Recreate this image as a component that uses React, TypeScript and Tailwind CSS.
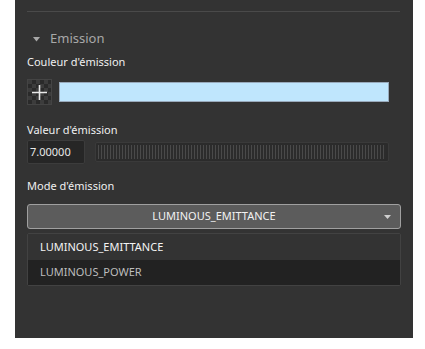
import React from 'react';

const Checker = () => (
  <div className="relative w-[25px] h-[26px] border border-[#444] bg-[repeating-conic-gradient(#2a2a2a_0_25%,#3c3c3c_0_50%)] bg-[length:8px_8px] flex items-center justify-center">
    <svg width="17" height="17" viewBox="0 0 17 17">
      <path d="M8.5 1v15M1 8.5h15" stroke="#e8e8e8" strokeWidth="1.6" />
    </svg>
  </div>
);

export default function App() {
  return (
    <div className="w-[425px] h-[349px] bg-white font-['Noto_Sans',sans-serif]">
      <div className="ml-[15px] w-[398px] h-[338px] bg-[#333333] pt-[11px] px-[12px]">
        <div className="h-px bg-[#4a4a4a] mr-[1px]" />

        <div className="flex items-center h-[20px] mt-[17px] pl-[6px] gap-[10px] text-[#a8a8a8] text-[13px]">
          <svg width="7" height="5" viewBox="0 0 7 5">
            <path d="M0 0h7L3.5 4.5z" fill="#a8a8a8" />
          </svg>
          <span>Emission</span>
        </div>

        <div className="mt-[5px] text-[11px] text-[#f0f0f0] leading-[16px]">Couleur d'émission</div>
        <div className="flex items-center gap-[7px] mt-[9px] mr-[12px]">
          <Checker />
          <div className="flex-1 h-[20px] bg-[#bfe6fd] border border-[#9ab]" />
        </div>

        <div className="mt-[17px] text-[11px] text-[#f0f0f0] leading-[16px]">Valeur d'émission</div>
        <div className="flex items-center gap-[10px] mt-[2px] mr-[12px]">
          <div className="w-[58px] h-[24px] bg-[#262626] border border-[#3c3c3c] rounded-[2px] flex items-center pl-[2px] text-[11px] text-[#e8e8e8]">
            7.00000
          </div>
          <div className="flex-1 h-[20px] border border-[#3a3a3a] rounded-[2px] bg-[#2b2b2b] p-[2px]">
            <div className="h-full bg-[repeating-linear-gradient(90deg,#4a4a4a_0_1px,#2c2c2c_1px_3px)]" />
          </div>
        </div>

        <div className="mt-[14px] text-[11px] text-[#f0f0f0] leading-[16px]">Mode d'émission</div>
        <div className="relative mt-[10px] h-[25px] bg-[#5c5c5c] border border-[#a0a0a0] rounded-[3px] flex items-center justify-center text-[11px] text-[#f2f2f2]">
          LUMINOUS_EMITTANCE
          <svg className="absolute right-[9px] top-[10px]" width="7" height="4" viewBox="0 0 7 4">
            <path d="M0 0h7L3.5 4z" fill="#cfcfcf" />
          </svg>
        </div>

        <div className="mt-[4px] border border-[#424242] rounded-[2px] text-[11px]">
          <div className="h-[26px] bg-[#333333] flex items-center pl-[12px] text-[#f4f4f4]">LUMINOUS_EMITTANCE</div>
          <div className="h-[25px] bg-[#222222] flex items-center pl-[12px] text-[#bdbdbd]">LUMINOUS_POWER</div>
        </div>
      </div>
    </div>
  );
}
